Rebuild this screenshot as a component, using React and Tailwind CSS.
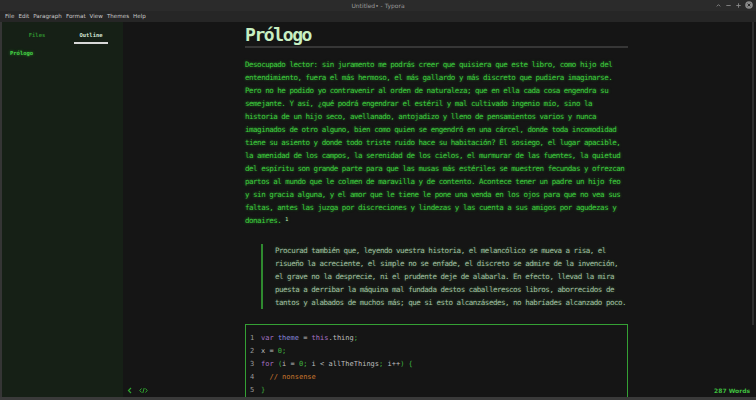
import React from "react";

const para = [
  "Desocupado lector: sin juramento me podrás creer que quisiera que este libro, como hijo del",
  "entendimiento, fuera el más hermoso, el más gallardo y más discreto que pudiera imaginarse.",
  "Pero no he podido yo contravenir al orden de naturaleza; que en ella cada cosa engendra su",
  "semejante. Y así, ¿qué podrá engendrar el estéril y mal cultivado ingenio mío, sino la",
  "historia de un hijo seco, avellanado, antojadizo y lleno de pensamientos varios y nunca",
  "imaginados de otro alguno, bien como quien se engendró en una cárcel, donde toda incomodidad",
  "tiene su asiento y donde todo triste ruido hace su habitación? El sosiego, el lugar apacible,",
  "la amenidad de los campos, la serenidad de los cielos, el murmurar de las fuentes, la quietud",
  "del espíritu son grande parte para que las musas más estériles se muestren fecundas y ofrezcan",
  "partos al mundo que le colmen de maravilla y de contento. Acontece tener un padre un hijo feo",
  "y sin gracia alguna, y el amor que le tiene le pone una venda en los ojos para que no vea sus",
  "faltas, antes las juzga por discreciones y lindezas y las cuenta a sus amigos por agudezas y",
];

const quote = [
  "Procurad también que, leyendo vuestra historia, el melancólico se mueva a risa, el",
  "risueño la acreciente, el simple no se enfade, el discreto se admire de la invención,",
  "el grave no la desprecie, ni el prudente deje de alabarla. En efecto, llevad la mira",
  "puesta a derribar la máquina mal fundada destos caballerescos libros, aborrecidos de",
  "tantos y alabados de muchos más; que si esto alcanzásedes, no habríades alcanzado poco.",
];

const menu = ["File", "Edit", "Paragraph", "Format", "View", "Themes", "Help"];

function Kw({ children }) {
  return <span className="text-[#a672c4]">{children}</span>;
}
function G({ children }) {
  return <span className="text-[#3fb23f]">{children}</span>;
}

export default function App() {
  return (
    <div className="w-[756px] h-[400px] flex flex-col bg-[#151515] overflow-hidden font-['DejaVu_Sans',sans-serif]">
      {/* title bar */}
      <div className="h-[11px] bg-[#2b2b2b] relative flex items-center justify-center">
        <span className="text-[6px] text-[#9a9a9a] leading-none">Untitled• - Typora</span>
        <div className="absolute right-[3px] top-[1px] flex items-center gap-[3px]">
          <svg width="7" height="7" viewBox="0 0 8 8">
            <path d="M2 5 L4 3 L6 5" stroke="#8a8a8a" strokeWidth="1" fill="none" />
          </svg>
          <svg width="7" height="7" viewBox="0 0 8 8">
            <path d="M1.5 4 H6.5" stroke="#8a8a8a" strokeWidth="1" />
          </svg>
          <svg width="7" height="7" viewBox="0 0 8 8">
            <path d="M1.5 4 H6.5 M4 1.5 V6.5" stroke="#8a8a8a" strokeWidth="1" />
          </svg>
          <svg width="8" height="8" viewBox="0 0 8 8">
            <circle cx="4" cy="4" r="3.8" fill="#8a8a8a" />
            <path d="M2.6 2.6 L5.4 5.4 M5.4 2.6 L2.6 5.4" stroke="#2b2b2b" strokeWidth="1" />
          </svg>
        </div>
      </div>

      {/* menu bar */}
      <div className="h-[11px] bg-[#262626] flex items-center gap-[4px] pl-[5px]">
        {menu.map((m) => (
          <span key={m} className="text-[5.6px] leading-none text-[#c8c8c8]">
            {m}
          </span>
        ))}
      </div>

      {/* body */}
      <div className="flex-1 flex min-h-0 border-l-2 border-[#353535]">
        {/* sidebar */}
        <div className="w-[121px] bg-[#162016] flex flex-col font-['DejaVu_Sans_Mono',monospace]">
          <div className="flex pt-[9px] px-[15px] justify-between">
            <div className="w-[40px] flex justify-center">
              <span className="text-[5.5px] font-bold text-[#2f8f2f] leading-[8px]">Files</span>
            </div>
            <div className="w-[34px] flex flex-col items-center">
              <span className="text-[5.5px] font-bold text-[#d6e6d6] leading-[8px]">Outline</span>
              <div className="mt-[3px] h-[2px] w-full bg-[#d8d8d8]" />
            </div>
          </div>
          <div className="pl-[8px] pt-[5px] text-[5.5px] font-bold text-[#45d045] [text-shadow:0_0_3px_rgba(60,220,60,0.6)]">
            Prólogo
          </div>
        </div>

        {/* editor */}
        <div className="flex-1 relative min-w-0 overflow-hidden">
          <div className="ml-[122px] w-[383px] pt-[2px] font-['DejaVu_Sans_Mono',monospace]">
            <h1 className="text-[18px] font-bold leading-[21px] tracking-[-1.4px] text-[#c8efc2] pb-[1px] border-b-2 border-[#363636]">
              Prólogo
            </h1>

            <div className="mt-[10px] text-[7.5px] leading-[13px] tracking-[-0.48px] text-[#3fcb3f] [text-shadow:0_0_3px_rgba(50,230,50,0.55)] whitespace-nowrap">
              {para.map((l, i) => (
                <div key={i}>{l}</div>
              ))}
              <div>
                donaires. <sup className="text-[5px] text-[#c8efc2]">1</sup>
              </div>
            </div>

            <div className="mt-[17px] ml-[16px] border-l-2 border-[#2f8a2f] pl-[12px] text-[7.5px] leading-[13px] tracking-[-0.48px] text-[#a4bea4] [text-shadow:0_0_3px_rgba(80,200,80,0.45)] whitespace-nowrap">
              {quote.map((l, i) => (
                <div key={i}>{l}</div>
              ))}
            </div>

            <div className="mt-[15px] border border-[#34a034] pt-[7px] pb-[8px] pl-[4px] text-[7px] leading-[13px] whitespace-pre text-[#bdbdbd]">
              <div className="flex">
                <span className="w-[11px] text-[#9a9a9a]">1</span>
                <span>
                  <Kw>var</Kw> <span className="text-[#8585dc]">theme</span> = <Kw>this</Kw>.thing<G>;</G>
                </span>
              </div>
              <div className="flex">
                <span className="w-[11px] text-[#9a9a9a]">2</span>
                <span>
                  x = <G>0</G><G>;</G>
                </span>
              </div>
              <div className="flex">
                <span className="w-[11px] text-[#9a9a9a]">3</span>
                <span>
                  <Kw>for</Kw> <G>(</G>i = <G>0</G><G>;</G> i &lt; allTheThings<G>;</G> i++<G>)</G> <G>{"{"}</G>
                </span>
              </div>
              <div className="flex">
                <span className="w-[11px] text-[#9a9a9a]">4</span>
                <span className="text-[#c9772e]">{"  // nonsense"}</span>
              </div>
              <div className="flex">
                <span className="w-[11px] text-[#9a9a9a]">5</span>
                <G>{"}"}</G>
              </div>
            </div>
          </div>

          {/* scrollbar */}
          <div className="absolute right-[2px] top-0 w-[2px] h-[303px] bg-[#2e2e2e]" />

          {/* footer */}
          <div className="absolute left-0 right-0 bottom-0 h-[13px] flex items-center justify-between pl-[4px] pr-[6px]">
            <div className="flex items-center gap-[6px]">
              <svg width="6" height="7" viewBox="0 0 6 7">
                <path d="M4 1 L1.5 3.5 L4 6" stroke="#2fa52f" strokeWidth="1.2" fill="none" />
              </svg>
              <svg width="9" height="7" viewBox="0 0 9 7">
                <path d="M2.5 1.5 L0.8 3.5 L2.5 5.5 M6.5 1.5 L8.2 3.5 L6.5 5.5 M5.2 1 L3.8 6" stroke="#2fa52f" strokeWidth="1" fill="none" />
              </svg>
            </div>
            <span className="text-[6px] font-bold text-[#3fbf3f] leading-none">287 Words</span>
          </div>
        </div>
      </div>

      {/* bottom border */}
      <div className="h-[3px] bg-[#3a3a3a]" />
    </div>
  );
}
